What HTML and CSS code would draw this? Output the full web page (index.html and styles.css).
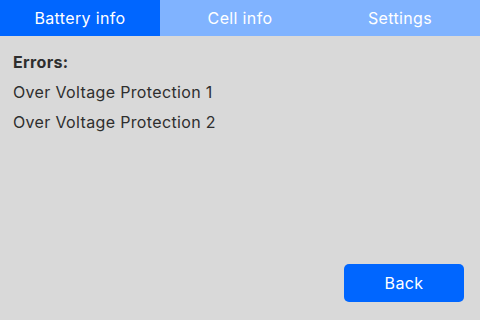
FILE: index.html
```html
<!DOCTYPE html>
<html>
<head>
<meta charset="utf-8">
<link rel="stylesheet" href="styles.css">
</head>
<body>
<div class="screen">
  <div class="tabs">
    <div class="tab active">Battery info</div>
    <div class="tab">Cell info</div>
    <div class="tab">Settings</div>
  </div>
  <div class="content">
    <div class="title">Errors:</div>
    <div class="line">Over Voltage Protection 1</div>
    <div class="line">Over Voltage Protection 2</div>
  </div>
  <div class="footer">
    <button class="btn">Back</button>
  </div>
</div>
</body>
</html>
```
FILE: styles.css
```css
html, body {
  margin: 0;
  padding: 0;
}
body {
  width: 480px;
  height: 320px;
  background: #d9d9d9;
  font-family: "Inter", "Open Sans", sans-serif;
  letter-spacing: 0.35px;
  overflow: hidden;
}
.screen {
  width: 480px;
  height: 320px;
  display: flex;
  flex-direction: column;
}
.tabs {
  display: flex;
  height: 36px;
  background: #80b3ff;
}
.tab {
  flex: 1;
  display: flex;
  align-items: center;
  justify-content: center;
  color: #ffffff;
  font-size: 16px;
  padding-bottom: 1px;
}
.tab.active {
  background: #0066ff;
}
.content {
  flex: 1;
  padding: 16px 13px 0;
  color: #2e2e2e;
  font-size: 16px;
}
.title {
  font-weight: 700;
  height: 30px;
  line-height: 20px;
}
.line {
  height: 30px;
  line-height: 20px;
}
.footer {
  display: flex;
  justify-content: flex-end;
  padding: 0 16px 18px 0;
}
.btn {
  width: 120px;
  height: 38px;
  border: none;
  border-radius: 5px;
  background: #0066ff;
  color: #ffffff;
  font-family: inherit;
  letter-spacing: inherit;
  font-size: 16px;
  padding: 0;
}
```
